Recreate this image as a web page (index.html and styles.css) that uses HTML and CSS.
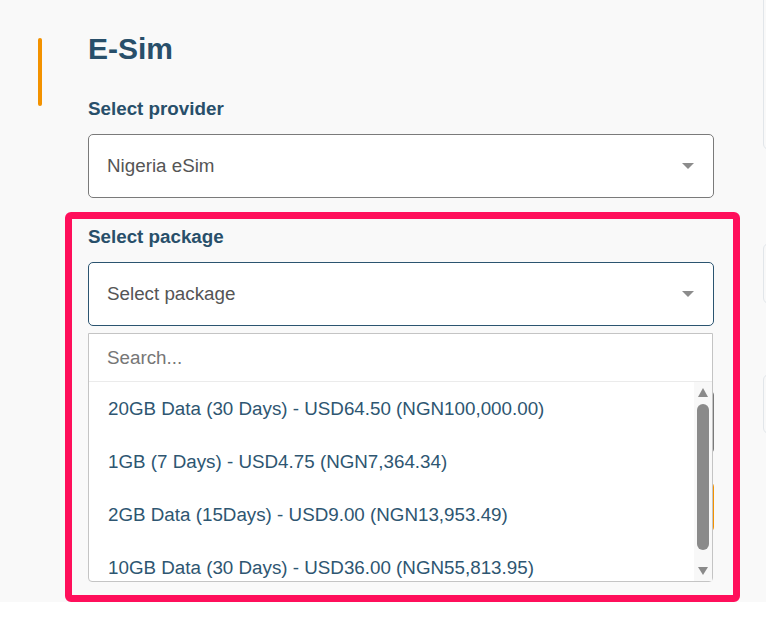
FILE: index.html
```html
<!DOCTYPE html>
<html lang="en">
<head>
<meta charset="utf-8">
<title>E-Sim</title>
<link rel="stylesheet" href="styles.css">
</head>
<body>
<div class="page">
  <div class="stepper"><span class="step-bar"></span></div>
  <main class="form">
    <h1 class="title">E-Sim</h1>
    <div class="field">
      <label class="label">Select provider</label>
      <div class="select"><span class="value">Nigeria eSim</span><i class="caret"></i></div>
    </div>
    <div class="field">
      <label class="label">Select package</label>
      <div class="select focused"><span class="value">Select package</span><i class="caret"></i></div>
      <div class="menu">
        <div class="menu-search">Search...</div>
        <div class="menu-body">
          <div class="options">
            <div class="option">20GB Data (30 Days) - USD64.50 (NGN100,000.00)</div>
            <div class="option">1GB (7 Days) - USD4.75 (NGN7,364.34)</div>
            <div class="option">2GB Data (15Days) - USD9.00 (NGN13,953.49)</div>
            <div class="option">10GB Data (30 Days) - USD36.00 (NGN55,813.95)</div>
          </div>
          <div class="scrollbar">
            <i class="arrow-up"></i>
            <i class="thumb"></i>
            <i class="arrow-down"></i>
          </div>
        </div>
      </div>
    </div>
    <div class="field">
      <div class="label-space"></div>
      <div class="select"></div>
    </div>
    <button class="btn" type="button" aria-label="Continue"></button>
  </main>
  <aside class="side">
    <div class="card card-a"></div>
    <div class="card card-b"></div>
    <div class="card card-c"></div>
  </aside>
  <div class="highlight"></div>
</div>
</body>
</html>
```
FILE: styles.css
```css
html, body {
  margin: 0;
  background: #ffffff;
  font-family: "Liberation Sans", Arial, sans-serif;
  overflow: hidden;
}
.page {
  position: relative;
  display: flex;
  height: 602px;
  background: #f9f9f9;
  overflow: hidden;
}
.stepper {
  flex: none;
  width: 88px;
  box-sizing: border-box;
  padding: 38px 0 0 38px;
}
.step-bar {
  display: block;
  width: 4px;
  height: 68px;
  border-radius: 2px;
  background: #f39200;
}
.form {
  flex: none;
  width: 626px;
  padding-top: 31px;
}
.title {
  margin: 0 0 30px;
  font-size: 30px;
  line-height: 36px;
  font-weight: 700;
  color: #284f6a;
}
.field {
  position: relative;
  margin-bottom: 27px;
}
.label {
  display: block;
  margin-bottom: 13px;
  font-size: 18.8px;
  line-height: 24px;
  font-weight: 700;
  color: #284f6a;
}
.label-space {
  height: 24px;
  margin-bottom: 13px;
}
.select {
  display: flex;
  align-items: center;
  justify-content: space-between;
  height: 64px;
  box-sizing: border-box;
  padding: 0 19px 0 18px;
  border: 1px solid #7a7a7a;
  border-radius: 5px;
  background: #ffffff;
  font-size: 18.8px;
  color: #555555;
}
.select.focused {
  border-color: #2b5470;
}
.caret {
  width: 0;
  height: 0;
  border-left: 6.5px solid transparent;
  border-right: 6.5px solid transparent;
  border-top: 6px solid #8c8c8c;
}
.menu {
  position: absolute;
  z-index: 3;
  left: 0;
  right: 1px;
  top: calc(100% + 7px);
  height: 249px;
  box-sizing: border-box;
  display: flex;
  flex-direction: column;
  border: 1px solid #c4c4c4;
  border-radius: 0 0 4px 4px;
  background: #ffffff;
}
.menu-search {
  flex: none;
  display: flex;
  align-items: center;
  height: 47px;
  padding-left: 18px;
  border-bottom: 1px solid #ebebeb;
  font-size: 18.8px;
  color: #767676;
}
.menu-body {
  flex: 1;
  display: flex;
  min-height: 0;
}
.options {
  flex: 1;
  overflow: hidden;
}
.option {
  display: flex;
  align-items: center;
  height: 53px;
  padding-left: 19px;
  font-size: 18.8px;
  color: #2e5671;
  white-space: nowrap;
}
.scrollbar {
  flex: none;
  width: 18px;
  display: flex;
  flex-direction: column;
  align-items: center;
  background: #f8f8f8;
}
.arrow-up {
  margin-top: 6px;
  width: 0;
  height: 0;
  border-left: 5.5px solid transparent;
  border-right: 5.5px solid transparent;
  border-bottom: 9px solid #8a8a8a;
}
.thumb {
  margin-top: 7px;
  width: 12px;
  height: 146px;
  border-radius: 6px;
  background: #8a8a8a;
}
.arrow-down {
  margin-top: 17px;
  width: 0;
  height: 0;
  border-left: 5.5px solid transparent;
  border-right: 5.5px solid transparent;
  border-top: 8px solid #8a8a8a;
}
.btn {
  display: block;
  width: 100%;
  height: 52px;
  margin-top: 2px;
  border: none;
  border-radius: 6px;
  background: #f39200;
}
.side {
  flex: none;
  margin-left: 49px;
  display: flex;
  flex-direction: column;
}
.card {
  width: 220px;
  box-sizing: border-box;
  border: 1px solid #e2e6ea;
  border-radius: 6px;
}
.card-a {
  margin-top: -10px;
  height: 160px;
}
.card-b {
  margin-top: 93px;
  height: 61px;
}
.card-c {
  margin-top: 70px;
  height: 60px;
}
.highlight {
  position: absolute;
  z-index: 5;
  left: 65px;
  top: 212px;
  width: 675px;
  height: 390px;
  box-sizing: border-box;
  border: 7px solid #ff0f5b;
  border-radius: 6px;
  pointer-events: none;
}
```
